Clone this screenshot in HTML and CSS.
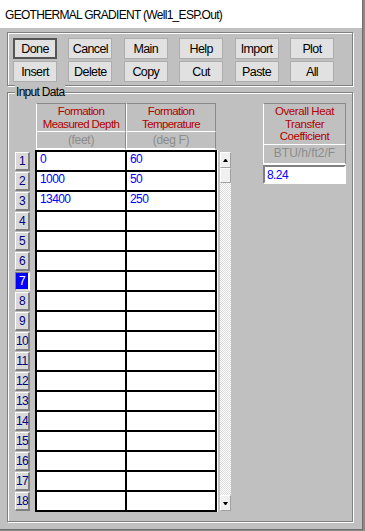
FILE: index.html
```html
<!DOCTYPE html>
<html>
<head>
  <title>Geothermal Gradient</title>
  <link rel="stylesheet" href="styles.css">
</head>
<body>
  <div class="window">
    <div class="title-bar">GEOTHERMAL GRADIENT (Well1_ESP.Out)</div>
    <div class="client">

      <div class="toolbar">
        <button class="btn default">Done</button>
        <button class="btn">Cancel</button>
        <button class="btn">Main</button>
        <button class="btn">Help</button>
        <button class="btn">Import</button>
        <button class="btn">Plot</button>
        <button class="btn">Insert</button>
        <button class="btn">Delete</button>
        <button class="btn">Copy</button>
        <button class="btn">Cut</button>
        <button class="btn">Paste</button>
        <button class="btn">All</button>
      </div>

      <div class="group">
        <div class="group-label">Input Data</div>
        <div class="group-body">

          <div class="table-area">
            <div class="heads">
              <div class="head">Formation<br>Measured Depth</div>
              <div class="head">Formation<br>Temperature</div>
              <div class="unit">(feet)</div>
              <div class="unit">(deg F)</div>
            </div>

            <div class="table-body">
              <div class="row-nums">
                <div class="row-num">1</div>
                <div class="row-num">2</div>
                <div class="row-num">3</div>
                <div class="row-num">4</div>
                <div class="row-num">5</div>
                <div class="row-num">6</div>
                <div class="row-num selected">7</div>
                <div class="row-num">8</div>
                <div class="row-num">9</div>
                <div class="row-num">10</div>
                <div class="row-num">11</div>
                <div class="row-num">12</div>
                <div class="row-num">13</div>
                <div class="row-num">14</div>
                <div class="row-num">15</div>
                <div class="row-num">16</div>
                <div class="row-num">17</div>
                <div class="row-num">18</div>
              </div>

              <div class="grid">
                <!-- rows 1-3 -->
                <div class="cell">0</div><div class="cell">60</div>
                <div class="cell">1000</div><div class="cell">50</div>
                <div class="cell">13400</div><div class="cell">250</div>
                <!-- rows 4-18 -->
                <div class="cell"></div><div class="cell"></div>
                <div class="cell"></div><div class="cell"></div>
                <div class="cell"></div><div class="cell"></div>
                <div class="cell"></div><div class="cell"></div>
                <div class="cell"></div><div class="cell"></div>
                <div class="cell"></div><div class="cell"></div>
                <div class="cell"></div><div class="cell"></div>
                <div class="cell"></div><div class="cell"></div>
                <div class="cell"></div><div class="cell"></div>
                <div class="cell"></div><div class="cell"></div>
                <div class="cell"></div><div class="cell"></div>
                <div class="cell"></div><div class="cell"></div>
                <div class="cell"></div><div class="cell"></div>
                <div class="cell"></div><div class="cell"></div>
                <div class="cell"></div><div class="cell"></div>
              </div>

              <div class="scrollbar">
                <div class="sb-btn"><span class="arrow-up"></span></div>
                <div class="sb-btn sb-thumb"></div>
                <div class="sb-track"></div>
                <div class="sb-btn"><span class="arrow-down"></span></div>
              </div>
            </div>
          </div>

          <div class="side">
            <div class="head side-head">Overall Heat<br>Transfer<br>Coefficient</div>
            <div class="unit">BTU/h/ft2/F</div>
            <input class="coef" type="text" value="8.24">
          </div>

        </div>
      </div>

    </div>
  </div>
</body>
</html>
```

FILE: styles.css
```css
    body {
      margin: 0;
      background-color: #8a8a8a;
      font-family: "Liberation Sans", Arial, sans-serif;
      font-size: 12px;
      letter-spacing: -0.6px;
    }
    .window {
      width: 362px;
      height: 529px;
      border-right: 1px solid #6e6e6e;
      border-bottom: 1px solid #6e6e6e;
      background-color: #c0c0c0;
      display: flex;
      flex-direction: column;
    }
    .title-bar {
      height: 28px;
      padding-left: 5px;
      background-color: #fff;
      color: #000;
      letter-spacing: -0.7px;
      line-height: 30px;
    }
    .client {
      flex: 1;
      padding: 4px 0 0 7px;
    }

    /* button bar */
    .toolbar {
      width: 346px;
      height: 54px;
      box-sizing: border-box;
      border: 1px solid #808080;
      box-shadow: inset 1px 1px #fff, 1px 1px #fff;
      padding: 5px 0 0 5px;
      display: grid;
      grid-template-columns: repeat(6, 44px);
      grid-auto-rows: 21px;
      column-gap: 11.4px;
      row-gap: 2px;
    }
    .btn {
      padding: 0;
      background-color: #e1e1e1;
      border: 1px solid #adadad;
      color: #000;
      font-family: inherit;
      font-size: 12.5px;
      letter-spacing: -0.6px;
    }
    .btn.default {
      border: 2px solid #555;
    }

    /* input data group */
    .group {
      margin-top: 6px;
      width: 346px;
      height: 430px;
      box-sizing: border-box;
      border: 1px solid #808080;
      box-shadow: inset 1px 1px #fff, 1px 1px #fff;
    }
    .group-label {
      width: fit-content;
      margin: -8px 0 0 7px;
      padding: 0 1px;
      background-color: #c0c0c0;
      letter-spacing: -0.7px;
      line-height: 14px;
    }
    .group-body {
      display: flex;
      margin-top: 4px;
      padding-left: 7px;
    }
    .table-area {
      display: flex;
      flex-direction: column;
    }
    .heads {
      display: grid;
      grid-template-columns: 90px 90px;
      grid-template-rows: 29px 18px;
      margin-left: 21px;
    }
    .head {
      box-sizing: border-box;
      border: 1px solid;
      border-color: #8a8a8a #8a8a8a #fff #fff;
      color: #b00000;
      font-size: 11.5px;
      line-height: 12.5px;
      text-align: center;
      display: flex;
      align-items: center;
      justify-content: center;
    }
    .unit {
      box-sizing: border-box;
      border-left: 1px solid #fff;
      border-right: 1px solid #8a8a8a;
      border-bottom: 2px solid #fff;
      color: #8c8c8c;
      letter-spacing: -0.3px;
      line-height: 16px;
      text-align: center;
    }
    .table-body {
      display: flex;
      align-items: flex-start;
    }
    .row-nums {
      width: 15px;
      margin-top: 2px;
      display: flex;
      flex-direction: column;
      gap: 1px;
    }
    .row-num {
      height: 19px;
      box-sizing: border-box;
      border-left: 1px solid #fff;
      border-top: 1px solid #fff;
      border-right: 2px solid #808080;
      border-bottom: 2px solid #808080;
      background-color: #d9d9d9;
      color: #000080;
      line-height: 16px;
      text-align: center;
    }
    .row-num.selected {
      border-color: #808080 #fff #d9d9d9 #808080;
      background-color: #0000ff;
      color: #fff;
    }
    .grid {
      margin-left: 5px;
      padding: 2px;
      background-color: #000;
      box-shadow: 1px 0 #fff;
      display: grid;
      grid-template-columns: 88px 88px;
      grid-auto-rows: 18px;
      gap: 2px;
    }
    .cell {
      padding-left: 3px;
      background-color: #fff;
      color: #0000ff;
      line-height: 14px;
    }
    .scrollbar {
      width: 11px;
      height: 359px;
      margin: 2px 0 0 3px;
      display: flex;
      flex-direction: column;
      background: repeating-conic-gradient(#fff 0 25%, #dcdcdc 0 50%) 0 0 / 2px 2px;
    }
    .sb-btn {
      height: 16px;
      box-sizing: border-box;
      border: 1px solid;
      border-color: #fff #a0a0a0 #a0a0a0 #fff;
      background-color: #f0f0f0;
      display: flex;
      align-items: center;
      justify-content: center;
    }
    .sb-thumb {
      height: 15px;
    }
    .sb-track {
      flex: 1;
    }
    .arrow-up, .arrow-down {
      width: 1px;
      height: 0;
      border-left: 2px solid transparent;
      border-right: 2px solid transparent;
    }
    .arrow-up {
      border-bottom: 3px solid #000;
    }
    .arrow-down {
      border-top: 3px solid #000;
    }

    /* heat transfer coefficient */
    .side {
      width: 83px;
      margin-left: 32px;
      display: flex;
      flex-direction: column;
    }
    .side-head {
      height: 42px;
      letter-spacing: -0.4px;
    }
    .side .unit {
      height: 20px;
      line-height: 17px;
      letter-spacing: 0;
      border-right: 1px solid #8a8a8a;
    }
    .coef {
      width: 83px;
      height: 19px;
      box-sizing: border-box;
      margin: 0;
      padding: 0 0 0 2px;
      border: 2px solid;
      border-color: #808080 #fff #fff #808080;
      background-color: #fff;
      color: #0000ff;
      font-family: inherit;
      font-size: 12px;
      letter-spacing: -0.6px;
      outline: none;
    }
```
